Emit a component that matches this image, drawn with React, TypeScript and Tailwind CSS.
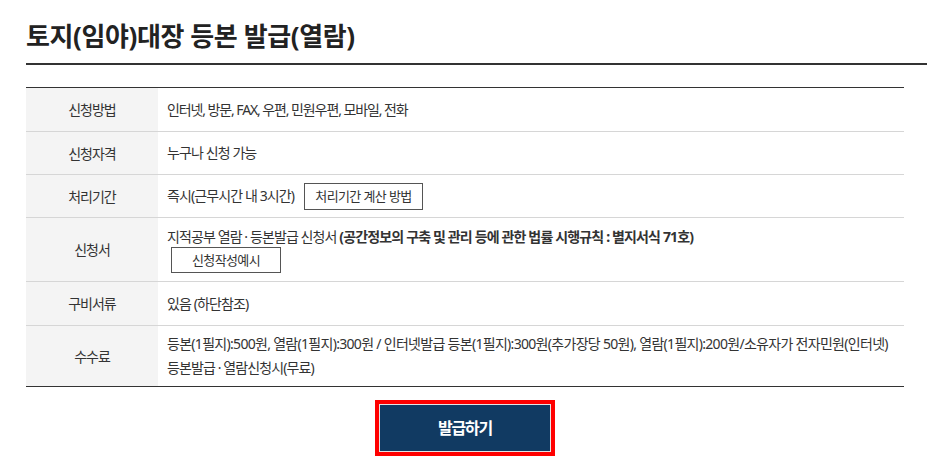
import type { ReactNode } from "react";
import clsx from "clsx";

interface RowProps {
  label: string;
  height: string;
  last?: boolean;
  children: ReactNode;
}

function Row({ label, height, last, children }: RowProps) {
  return (
    <div className={clsx("flex", height, !last && "border-b border-[#d6d6d6]")}>
      <div className="flex w-[132px] shrink-0 items-center justify-center bg-[#f4f4f4] text-[14px] tracking-[-1px] text-[#333]">
        {label}
      </div>
      <div className="flex flex-1 items-center pl-[9px] text-[14px] leading-[24px] tracking-[-0.9px] text-[#333]">
        {children}
      </div>
    </div>
  );
}

export default function App() {
  return (
    <div className="min-h-[468px] bg-white pl-[26px] font-['Noto_Sans','Noto_Sans_CJK_KR',sans-serif]">
      <h2 className="border-b-2 border-[#333] pb-[10px] pt-[19px] text-[26px] font-bold leading-[34px] tracking-[-0.4px] text-[#222]">
        토지(임야)대장 등본 발급(열람)
      </h2>

      <div className="mr-[23px] mt-[22px]">
        <div className="border-y border-[#333]">
          <Row label="신청방법" height="h-[44px]">
            <span className="tracking-[-1.1px]">인터넷, 방문, FAX, 우편, 민원우편, 모바일, 전화</span>
          </Row>
          <Row label="신청자격" height="h-[43px]">
            누구나 신청 가능
          </Row>
          <Row label="처리기간" height="h-[43px]">
            <div className="flex items-center gap-[10px]">
              <span>즉시(근무시간 내 3시간)</span>
              <button
                type="button"
                className="h-[27px] w-[119px] border border-[#555] bg-white text-[13px] tracking-[-0.6px] text-[#333]"
              >
                처리기간 계산 방법
              </button>
            </div>
          </Row>
          <Row label="신청서" height="h-[64px]">
            <div className="flex flex-col items-start">
              <span className="leading-[20px]">
                지적공부 열람 · 등본발급 신청서{" "}
                <b className="font-bold tracking-[-0.85px]">
                  (공간정보의 구축 및 관리 등에 관한 법률 시행규칙 : 별지서식 71호)
                </b>
              </span>
              <button
                type="button"
                className="ml-[4px] h-[26px] w-[110px] border border-[#555] bg-white text-[13px] tracking-[-0.6px] text-[#333]"
              >
                신청작성예시
              </button>
            </div>
          </Row>
          <Row label="구비서류" height="h-[44px]">
            있음 (하단참조)
          </Row>
          <Row label="수수료" height="h-[60px]" last>
            <div>
              <p className="tracking-[-0.7px]">
                등본(1필지):500원, 열람(1필지):300원 / 인터넷발급 등본(1필지):300원(추가장당 50원), 열람(1필지):200원/소유자가 전자민원(인터넷)
              </p>
              <p>등본발급 · 열람신청시(무료)</p>
            </div>
          </Row>
        </div>

        <div className="mt-[13px] flex justify-center">
          <div className="border-4 border-[#ff0000]">
            <button
              type="button"
              className="h-[48px] w-[172px] border border-[#e4e4e4] bg-[#113a62] text-[16px] font-bold tracking-[-1.2px] text-white"
            >
              발급하기
            </button>
          </div>
        </div>
      </div>
    </div>
  );
}
